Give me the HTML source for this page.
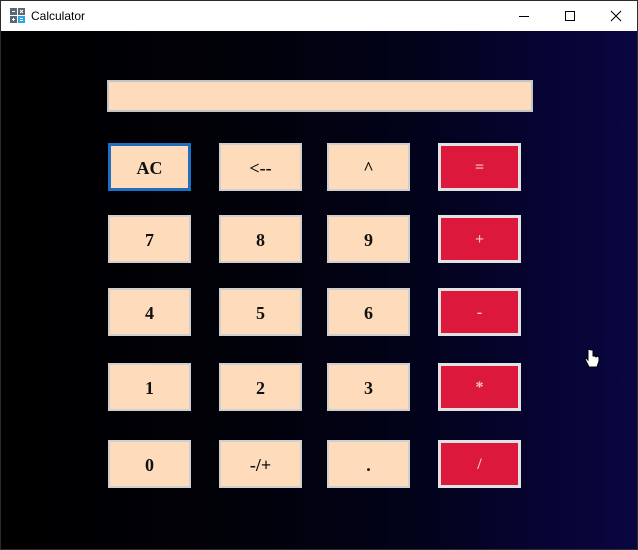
<!DOCTYPE html>
<html><head><style>
*{margin:0;padding:0;box-sizing:border-box}
body{width:638px;height:550px;overflow:hidden;background:#fff;font-family:"Liberation Serif",serif}
.win{position:absolute;left:0;top:0;width:638px;height:550px;border:1px solid #2b2b2b}
.title{position:absolute;left:0;top:0;width:636px;height:30px;background:#fff;font-family:"Liberation Sans",sans-serif;font-size:12px;color:#000}
.title .t{position:absolute;left:30px;top:8px}
.content{position:absolute;left:0;top:30px;width:636px;height:518px;background:linear-gradient(90deg,#000 0%,#010108 35%,#02021a 65%,#060432 85%,#0a0642 100%)}
.disp{position:absolute;left:107px;top:80px;width:426px;height:32px;background:#fddbbb;border:2px solid #c4c4c4}
.b{position:absolute;width:83px;height:48px;background:#fddbbb;border:2px solid #cfcfcf;display:flex;align-items:center;justify-content:center;font-weight:bold;font-size:18px;color:#111;padding-top:2px}
.r{background:#dc183c;color:#f8c4cc;border:3px solid #e2e2e2;font-size:16px}
.ac{border-color:#1f6fc0;border-width:3px}
</style></head><body>
<div class="win">
<div class="title">
<svg style="position:absolute;left:9px;top:7px" width="16" height="16"><rect x="0" y="0" width="7" height="7" fill="#5a6670"/><rect x="8" y="0" width="7" height="7" fill="#5a6670"/><rect x="0" y="8" width="7" height="7" fill="#5a6670"/><rect x="8" y="8" width="7" height="7" fill="#2ea3e0"/><path d="M2 3.5h3M10 2l3 3M13 2l-3 3M2 11.5h3M3.5 10v3M10 10.5h3M10 12.5h3" stroke="#fff" stroke-width="1"/></svg>
<span class="t">Calculator</span>
<svg style="position:absolute;left:510px;top:8px" width="120" height="14"><path d="M8 7.5h10" stroke="#000"/><rect x="54.5" y="2.5" width="9" height="9" fill="none" stroke="#000"/><path d="M100 2l10 10M110 2l-10 10" stroke="#000"/></svg>
</div>
<div class="content"></div>
</div>
<div class="disp"></div>
<div class="b ac" style="left:108px;top:143px">AC</div>
<div class="b" style="left:219px;top:143px">&lt;--</div>
<div class="b" style="left:327px;top:143px">^</div>
<div class="b r" style="left:438px;top:143px">=</div>
<div class="b" style="left:108px;top:215px">7</div>
<div class="b" style="left:219px;top:215px">8</div>
<div class="b" style="left:327px;top:215px">9</div>
<div class="b r" style="left:438px;top:215px">+</div>
<div class="b" style="left:108px;top:288px">4</div>
<div class="b" style="left:219px;top:288px">5</div>
<div class="b" style="left:327px;top:288px">6</div>
<div class="b r" style="left:438px;top:288px">-</div>
<div class="b" style="left:108px;top:363px">1</div>
<div class="b" style="left:219px;top:363px">2</div>
<div class="b" style="left:327px;top:363px">3</div>
<div class="b r" style="left:438px;top:363px">*</div>
<div class="b" style="left:108px;top:440px">0</div>
<div class="b" style="left:219px;top:440px">-/+</div>
<div class="b" style="left:327px;top:440px">.</div>
<div class="b r" style="left:438px;top:440px">/</div>
<svg style="position:absolute;left:584px;top:348px" width="16" height="22"><path d="M4 1v11l-2-2-1 1 4 8h8l2-6v-4l-2-1-1 1-1-1-2 0v-6l-2 0z" fill="#fff" stroke="#000"/></svg>
</body></html>
